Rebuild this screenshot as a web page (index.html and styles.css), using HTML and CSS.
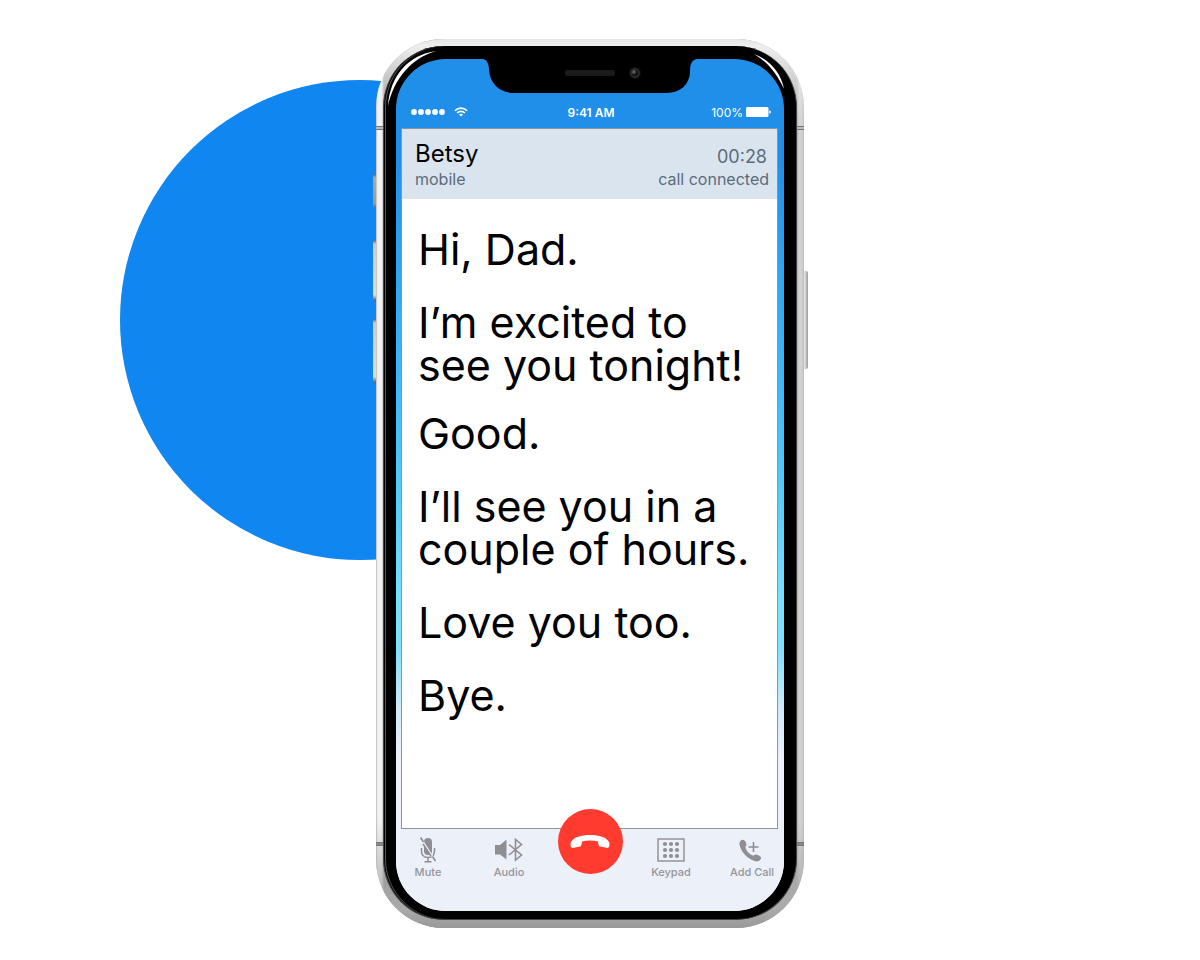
FILE: index.html
```html
<!DOCTYPE html>
<html lang="en">
<head>
  <meta charset="UTF-8">
  <meta name="viewport" content="width=device-width, initial-scale=1">
  <title>Call Captions</title>
  <link rel="stylesheet" href="styles.css">
</head>
<body>

<main class="hero">
  <div class="hero-circle"></div>

  <div class="phone">
    <span class="side-key silent"></span>
    <span class="side-key vol-up"></span>
    <span class="side-key vol-down"></span>
    <span class="side-key power"></span>

    <div class="antenna antenna-top"></div>
    <div class="antenna antenna-bottom"></div>

    <div class="bezel">
      <svg class="shine shine-left" width="60" height="60" viewBox="0 0 60 60" aria-hidden="true">
        <path d="M4 60 C6 30 24 9 52 5 C28 12 10 32 4 60Z" fill="#fff"/>
      </svg>
      <svg class="shine shine-right" width="60" height="60" viewBox="0 0 60 60" aria-hidden="true">
        <path d="M18 8 C34 14 45 27 48 43 C41 28 33 17 18 8Z" fill="#fff"/>
      </svg>

      <div class="screen">
        <svg class="notch" width="214" height="35" viewBox="0 0 214 35" aria-hidden="true">
          <path d="M0 0 C5 1 6 7 6 11 C7 25 17 34 31 34 L183 34 C198 34 206 25 207 14 C207 6 208 1 214 0 Z" fill="#000"/>
          <rect x="82" y="11" width="50" height="6" rx="2" fill="#1b1b1b"/>
          <circle cx="152" cy="14" r="6" fill="#101010"/>
          <circle cx="152" cy="14" r="4" fill="none" stroke="#2a2a2a" stroke-width="2"/>
          <circle cx="151" cy="13" r="2" fill="#555"/>
        </svg>

        <div class="status-bar">
          <div class="signal">
            <svg width="34" height="8" viewBox="0 0 34 8" fill="#fff" aria-hidden="true">
              <circle cx="3" cy="4" r="2.9"/><circle cx="10" cy="4" r="2.9"/><circle cx="17" cy="4" r="2.9"/><circle cx="24" cy="4" r="2.9"/><circle cx="31" cy="4" r="2.9"/>
            </svg>
            <svg width="14" height="10" viewBox="0 0 14 10" fill="none" stroke="#fff" stroke-width="1.6" aria-hidden="true">
              <path d="M.9 3.8 C4.4 .2 9.6 .2 13.1 3.8"/>
              <path d="M3.1 6 C5.3 3.8 8.7 3.8 10.9 6"/>
              <path d="M7 9.6 L4.9 7.5 C6.1 6.4 7.9 6.4 9.1 7.5Z" fill="#fff" stroke="none"/>
            </svg>
          </div>
          <span class="time">9:41 AM</span>
          <div class="battery">
            <span>100%</span>
            <svg width="25" height="10" viewBox="0 0 25 10" fill="#fff" aria-hidden="true">
              <rect x="0" y="0" width="22.5" height="10" rx="1.5"/>
              <path d="M23.3 3.2 Q25 3.6 25 5 Q25 6.4 23.3 6.8Z"/>
            </svg>
          </div>
        </div>

        <section class="call">
          <header class="call-info">
            <div class="caller">
              <h1 class="name">Betsy</h1>
              <p class="detail">mobile</p>
            </div>
            <div class="call-state">
              <p class="timer">00:28</p>
              <p class="detail">call connected</p>
            </div>
          </header>

          <div class="captions">
            <div class="caption-group">
              <p>Hi, Dad.</p>
              <p>I’m excited to<br>see you tonight!</p>
            </div>
            <div class="caption-group">
              <p>Good.</p>
              <p>I’ll see you in a<br>couple of hours.</p>
              <p>Love you too.</p>
              <p>Bye.</p>
            </div>
          </div>
        </section>

        <nav class="controls">
          <button type="button" class="control">
            <svg width="18" height="26" viewBox="0 0 18 26" aria-hidden="true">
              <rect x="5" y="1" width="8" height="17" rx="4" fill="#8e8e93"/>
              <path d="M2.500 11 V14 C2.500 18 5 20.500 9 20.500 C13 20.500 15.500 18 15.500 14 V11 M9 20.500 V24.500 M5.500 24.700 H12.500" fill="none" stroke="#8e8e93" stroke-width="1.5"/>
              <path d="M3 3 L15 22" stroke="#ecf0f9" stroke-width="1.6"/>
              <path d="M1.500 .5 L4.500 5 M4 7 L12 19 M13.500 19.500 L16.500 24" stroke="#8e8e93" stroke-width="1.6"/>
            </svg>
            <span>Mute</span>
          </button>

          <button type="button" class="control">
            <svg width="28" height="26" viewBox="0 0 28 26" aria-hidden="true">
              <path d="M0 8 H5 L11.5 2.5 V22.5 L5 17.5 H0Z" fill="#8e8e93"/>
              <path d="M14 7.5 L26.5 18 L20.5 23 V2.5 L26.5 7.5 L14 18" fill="none" stroke="#8e8e93" stroke-width="1.6"/>
            </svg>
            <span>Audio</span>
          </button>

          <button type="button" class="hang-up" aria-label="End call">
            <svg width="40" height="15" viewBox="0 0 40 15" aria-hidden="true">
              <path d="M1 8 C4 3 11 1 20 1 C29 1 36 3 39 8 C40 10 39.500 14 37.500 14 L30 12.500 C28 12 28.500 9 28 7.500 C23 6 17 6 12 7.500 C11.500 9 12 12 10 12.500 L2.500 14 C.5 14 0 10 1 8Z" fill="#fff"/>
            </svg>
          </button>

          <button type="button" class="control">
            <svg width="28" height="26" viewBox="0 0 28 26" aria-hidden="true">
              <rect x="1" y="2" width="26" height="22" fill="none" stroke="#8e8e93" stroke-width="1.4"/>
              <g fill="#8e8e93">
                <circle cx="8" cy="7" r="2.1"/><circle cx="14" cy="7" r="2.1"/><circle cx="20" cy="7" r="2.1"/>
                <circle cx="8" cy="13" r="2.1"/><circle cx="14" cy="13" r="2.1"/><circle cx="20" cy="13" r="2.1"/>
                <circle cx="8" cy="19" r="2.1"/><circle cx="14" cy="19" r="2.1"/><circle cx="20" cy="19" r="2.1"/>
              </g>
            </svg>
            <span>Keypad</span>
          </button>

          <button type="button" class="control">
            <svg width="26" height="26" viewBox="0 0 26 26" aria-hidden="true">
              <path d="M2 3.500 C4 1.500 7 4 7.500 7.500 C7.500 9 6 9.500 6.500 11 C7.500 14 10 17 13.500 18.500 C15 19 15.500 17.500 17 17.500 C19.500 18 22.500 19.500 22 21.500 C21 24 18 25 15.500 24 C8 21.500 1.500 14 .5 7.500 C.3 5.500 1 4.300 2 3.500Z" fill="#8e8e93"/>
              <path d="M14.500 5 V15 M9.500 10 H19.500" stroke="#8e8e93" stroke-width="1.6"/>
            </svg>
            <span>Add Call</span>
          </button>
        </nav>
      </div>
    </div>
  </div>
</main>

</body>
</html>
```

FILE: styles.css
```css
* {
  box-sizing: border-box;
}

body {
  margin: 0;
  background-color: #fff;
  font-family: Inter, "Liberation Sans", sans-serif;
}

h1, p {
  margin: 0;
  font-weight: 400;
}

.hero {
  position: relative;
  max-width: 960px;
  margin: 0 auto;
  padding: 39px 0 32px;
}

.hero-circle {
  position: absolute;
  top: 80px;
  left: 0;
  width: 480px;
  height: 480px;
  border-radius: 50%;
  background-color: #1086f0;
}

/* phone body */
.phone {
  position: relative;
  width: 428px;
  margin-left: 256px;
  padding: 7px 7px 8px;
  border-radius: 68px;
  background: linear-gradient(to right, #bbb 0, #f6f6f6 2px, #eee 6px, #888 8px, #888 50%, #aaa 421px, #d4d4d4 423px, #d0d0d0 426px, #bbb 428px);
}

.phone::before {
  content: "";
  position: absolute;
  inset: 0;
  border-radius: 68px;
  background: linear-gradient(to bottom, #e4e4e4 0, #eee 7px, transparent 90px, transparent 780px, #aaa 870px, #999 100%);
}

.side-key {
  position: absolute;
  left: -3px;
  width: 3px;
  border-radius: 2px 0 0 2px;
  background: linear-gradient(to bottom, #666, #ccc 4px, #ddd 90%, #555);
}

.silent {
  top: 135px;
  height: 33px;
  background: linear-gradient(to bottom, #666, #aaa 4px, #999 90%, #777);
}

.vol-up {
  top: 201px;
  height: 61px;
}

.vol-down {
  top: 280px;
  height: 64px;
}

.power {
  top: 232px;
  left: 428px;
  width: 4px;
  height: 98px;
  border-radius: 0 2px 2px 0;
  background: linear-gradient(to right, #eee, #999);
}

.antenna {
  position: absolute;
  left: 0;
  right: 0;
  height: 4px;
  border-top: 1px solid #777;
  border-bottom: 1px solid #777;
  background-color: #bbb;
}

.antenna-top {
  top: 87px;
}

.antenna-bottom {
  top: 803px;
  background-color: #888;
}

.bezel {
  position: relative;
  padding: 13px 12px 8px;
  border: 1px solid #444;
  border-top: 0;
  border-radius: 61px;
  background-color: #000;
  box-shadow: inset 1px 0 0 #000, inset 2px 0 0 #555;
}

.shine {
  position: absolute;
  top: 0;
}

.shine-left {
  left: 0;
}

.shine-right {
  right: 0;
}

/* screen */
.screen {
  position: relative;
  overflow: hidden;
  padding: 33px 6px 0 5px;
  border-radius: 50px;
  background: linear-gradient(to bottom, #208fe9 0, #208fe9 100px, #2ca2f0 190px, #3bb8f9 320px, #4fcaf8 420px, #78e0ff 540px, #80e0ff 590px, #d0eafc 650px, #ecf0f9 700px);
}

.notch {
  position: absolute;
  top: 0;
  left: 50%;
  transform: translateX(-50%);
}

.status-bar {
  display: grid;
  grid-template-columns: 1fr auto 1fr;
  align-items: center;
  height: 36px;
  padding: 4px 7px 0 10px;
  font-size: 12px;
  color: #fff;
}

.signal,
.battery {
  display: flex;
  align-items: center;
}

.signal {
  gap: 9px;
}

.battery {
  justify-content: flex-end;
  gap: 3px;
}

.time {
  font-weight: 600;
}

.call {
  border: 1px solid #8f939a;
  background-color: #fff;
}

.call-info {
  display: flex;
  justify-content: space-between;
  padding: 11px 8px 8px 13px;
  background-color: #dae4ee;
  color: #5b6c7c;
}

.name {
  font-size: 24px;
  line-height: 28px;
  color: #000;
}

.call-state {
  text-align: right;
}

.timer {
  padding: 5px 2px 0 0;
  font-size: 18px;
  line-height: 23px;
}

.detail {
  font-size: 16px;
  line-height: 23px;
}

.captions {
  height: 629px;
  padding: 29px 12px 0 16px;
  font-size: 43px;
  line-height: 43px;
  color: #000;
}

.caption-group + .caption-group {
  margin-top: 25px;
}

.caption-group p + p {
  margin-top: 30px;
}

/* bottom bar */
.controls {
  display: flex;
  justify-content: center;
  height: 82px;
  background-color: #ecf0f9;
  margin: 0 -6px 0 -5px;
}

.controls button {
  border: 0;
  padding: 0;
  font-family: inherit;
  cursor: pointer;
}

.control {
  display: flex;
  flex: 0 0 81px;
  flex-direction: column;
  align-items: center;
  gap: 2px;
  background: none;
}

.controls .control {
  padding-top: 8px;
  font-size: 11px;
  font-weight: 500;
  line-height: 14px;
  color: #95959a;
}

.hang-up {
  position: relative;
  display: flex;
  flex: 0 0 65px;
  align-items: center;
  justify-content: center;
  height: 65px;
  margin: -20px 8px 0;
  border-radius: 50%;
  background-color: #ff3b30;
}
```
